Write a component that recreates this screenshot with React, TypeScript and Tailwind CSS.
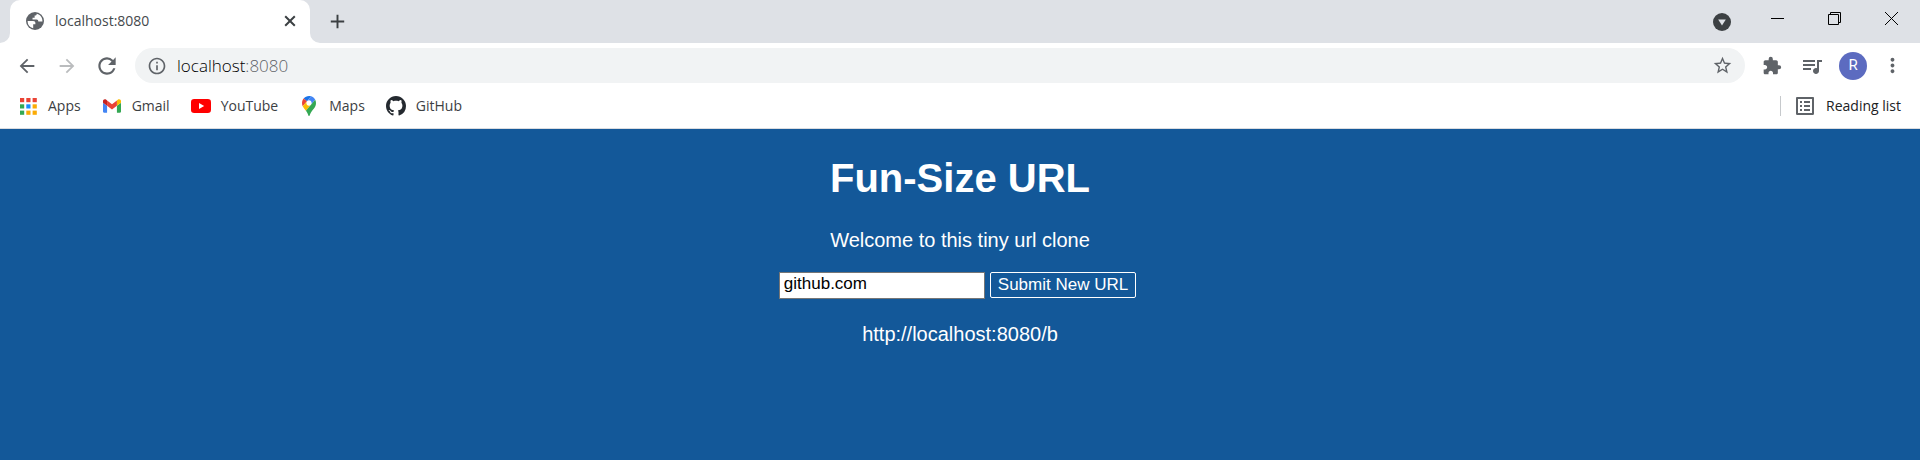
import React, { useState } from "react";
import {
  MdAdd,
  MdArrowBack,
  MdArrowForward,
  MdClose,
  MdExtension,
  MdInfoOutline,
  MdListAlt,
  MdMoreVert,
  MdQueueMusic,
  MdRefresh,
  MdStarOutline,
} from "react-icons/md";

function GlobeIcon() {
  return (
    <svg viewBox="0 0 24 24" className="size-[18px]" aria-hidden="true">
      <circle cx="12" cy="12" r="12" fill="#5f6368" />
      <path
        fill="#fff"
        d="M2.100 12h7.400c2 0 3 1 3 2.800v1.400H9.600v5.300A9.900 9.900 0 0 1 2.100 12zM14.400 2.300c-.2 1.700-1 2.500-2.900 2.500v2.700H8.700v2.400h5.400c1.700 0 2.300 1 2.300 2.600h5.500c.3-4.900-2.800-9-7.500-10.200z"
      />
    </svg>
  );
}

function AppsIcon() {
  const colors = [
    "#ea4335", "#ea4335", "#ea4335",
    "#34a853", "#1a8cff", "#fbab05",
    "#34a853", "#fbab05", "#fbab05",
  ];
  return (
    <svg viewBox="0 0 17 17" className="size-[17px]" aria-hidden="true">
      {colors.map((c, i) => (
        <rect key={i} x={(i % 3) * 6.3} y={Math.floor(i / 3) * 6.3} width="4.200" height="4.200" fill={c} />
      ))}
    </svg>
  );
}

function GmailIcon() {
  return (
    <svg viewBox="52 42 88 66" className="h-[14px] w-[18px]" aria-hidden="true">
      <path fill="#4285f4" d="M58 108h14V74L52 59v43c0 3.320 2.690 6 6 6" />
      <path fill="#34a853" d="M120 108h14c3.320 0 6-2.690 6-6V59l-20 15" />
      <path fill="#fbbc04" d="M120 48v26l20-15v-8c0-7.420-8.470-11.650-14.400-7.200" />
      <path fill="#ea4335" d="M72 74V48l24 18 24-18v26L96 92" />
      <path fill="#c5221f" d="M52 51v8l20 15V48l-5.600-4.200c-5.940-4.450-14.400-.22-14.400 7.200" />
    </svg>
  );
}

function YouTubeIcon() {
  return (
    <svg viewBox="0 0 20 14" className="h-[14px] w-5" aria-hidden="true">
      <rect width="20" height="14" rx="3.200" fill="#f00" />
      <path d="M8 4v6l5.200-3z" fill="#fff" />
    </svg>
  );
}

function MapsIcon() {
  return (
    <svg viewBox="0 0 92.300 132.300" className="h-5 w-[14px]" aria-hidden="true">
      <path fill="#1a73e8" d="M60.200 2.200C55.800.8 51 0 46.100 0 32 0 19.300 6.400 10.800 16.500l21.800 18.300L60.200 2.200z" />
      <path fill="#ea4335" d="M10.800 16.500C4.100 24.500 0 34.900 0 46.100c0 8.700 1.700 15.700 4.600 22l28-33.300-21.800-18.300z" />
      <path fill="#4285f4" d="M46.200 28.500c9.800 0 17.700 7.900 17.700 17.700 0 4.300-1.600 8.300-4.200 11.400 0 0 13.900-16.600 27.500-32.700-5.600-10.800-15.300-19-27-22.700L32.600 34.800c3.300-3.800 8.100-6.300 13.600-6.300" />
      <path fill="#fbbc04" d="M46.200 63.800c-9.800 0-17.700-7.900-17.700-17.700 0-4.300 1.500-8.300 4.100-11.300l-28 33.300c4.800 10.600 12.800 19.200 21 29.900l34.100-40.500c-3.300 3.900-8.100 6.300-13.500 6.300" />
      <path fill="#34a853" d="M59.100 109.200c15.400-24.100 33.300-35 33.300-63 0-7.700-1.900-14.900-5.200-21.300L25.600 98c2.600 3.400 5.300 7.300 7.900 11.300 9.400 14.500 6.800 23.100 12.800 23.100s3.400-8.700 12.800-23.200" />
    </svg>
  );
}

function GitHubIcon() {
  return (
    <svg viewBox="0 0 16 16" className="size-5" fill="#24292f" aria-hidden="true">
      <path d="M8 0C3.580 0 0 3.580 0 8c0 3.540 2.290 6.530 5.470 7.590.4.070.55-.17.55-.38 0-.19-.01-.82-.01-1.490-2.010.37-2.530-.49-2.690-.94-.09-.23-.48-.94-.82-1.130-.28-.15-.68-.52-.01-.53.63-.01 1.080.58 1.230.82.72 1.210 1.870.87 2.330.66.070-.52.28-.87.51-1.070-1.780-.2-3.640-.89-3.640-3.950 0-.87.31-1.590.82-2.150-.08-.2-.36-1.020.08-2.120 0 0 .67-.21 2.200.82.64-.18 1.320-.27 2-.27.68 0 1.360.09 2 .27 1.530-1.040 2.200-.82 2.200-.82.44 1.100.16 1.920.08 2.120.51.56.82 1.270.82 2.150 0 3.070-1.870 3.750-3.650 3.950.29.25.54.73.54 1.480 0 1.070-.01 1.930-.01 2.200 0 .21.15.46.55.38A8.013 8.013 0 0 0 16 8c0-4.420-3.580-8-8-8z" />
    </svg>
  );
}

const bookmarks = [
  { label: "Apps", href: "#apps", icon: <AppsIcon /> },
  { label: "Gmail", href: "#gmail", icon: <GmailIcon /> },
  { label: "YouTube", href: "#youtube", icon: <YouTubeIcon /> },
  { label: "Maps", href: "#maps", icon: <MapsIcon /> },
  { label: "GitHub", href: "#github", icon: <GitHubIcon /> },
];

function TabStrip() {
  return (
    <div className="flex h-[43px] items-stretch bg-[#dee1e6] pl-[10px]">
      <div className="relative flex w-[300px] items-center rounded-t-[10px] bg-white pb-px pl-4 pr-3">
        <svg viewBox="0 0 10 10" className="absolute -left-[10px] bottom-0 size-[10px]" aria-hidden="true">
          <path d="M10 0v10H0A10 10 0 0 0 10 0z" fill="#fff" />
        </svg>
        <svg viewBox="0 0 10 10" className="absolute -right-[10px] bottom-0 size-[10px]" aria-hidden="true">
          <path d="M0 0v10h10A10 10 0 0 1 0 0z" fill="#fff" />
        </svg>
        <GlobeIcon />
        <span className="ml-[11px] flex-1 text-sm text-[#45494d]">localhost:8080</span>
        <button type="button" aria-label="Close tab" className="text-[#3c4043]">
          <svg viewBox="0 0 16 16" className="size-4" fill="none" stroke="currentColor" strokeWidth="2" aria-hidden="true">
            <path d="M3.200 3.200l9.600 9.600M12.800 3.200l-9.600 9.600" />
          </svg>
        </button>
      </div>
      <button type="button" aria-label="New tab" className="ml-4 text-[#3c4043]">
        <MdAdd className="size-[23px]" />
      </button>
      <div className="ml-auto flex">
        <button type="button" aria-label="Search tabs" className="mr-[18px] pt-px">
          <svg viewBox="0 0 18 18" className="size-[18px]" aria-hidden="true">
            <circle cx="9" cy="9" r="9" fill="#3c4043" />
            <path d="M5.200 6.500h7.600L9 12.500z" fill="#dee1e6" />
          </svg>
        </button>
        <div className="flex pb-[6px] text-black">
          <button type="button" aria-label="Minimize" className="grid w-[57px] place-items-center">
            <svg viewBox="0 0 13 13" className="size-[13px]" aria-hidden="true">
              <path d="M0 6.500h13" stroke="currentColor" />
            </svg>
          </button>
          <button type="button" aria-label="Restore" className="grid w-[57px] place-items-center">
            <svg viewBox="0 0 13 13" className="size-[13px]" fill="none" stroke="currentColor" aria-hidden="true">
              <path d="M.5 2.500h10v10H.5zM2.500 2.500v-2h10v10h-2" />
            </svg>
          </button>
          <button type="button" aria-label="Close window" className="grid w-[57px] place-items-center">
            <svg viewBox="0 0 13 13" className="size-[13px]" aria-hidden="true">
              <path d="M0 0l13 13M13 0L0 13" stroke="currentColor" />
            </svg>
          </button>
        </div>
      </div>
    </div>
  );
}

function Toolbar() {
  return (
    <div className="flex h-[45px] items-center px-4 text-[#5f6368]">
      <button type="button" aria-label="Back">
        <MdArrowBack className="size-[22px]" />
      </button>
      <button type="button" aria-label="Forward" className="ml-[18px] text-[#babcbe]">
        <MdArrowForward className="size-[22px]" />
      </button>
      <button type="button" aria-label="Reload" className="ml-4">
        <MdRefresh className="size-[26px]" />
      </button>
      <div className="ml-[15px] flex h-[35px] flex-1 items-center rounded-full bg-[#f1f3f4] pl-3 pr-3">
        <MdInfoOutline className="size-5" />
        <div className="ml-[10px] flex-1 text-[17px] font-light">
          <span className="text-black">localhost</span>
          <span className="text-[#5f6368]">:8080</span>
        </div>
        <button type="button" aria-label="Bookmark this tab">
          <MdStarOutline className="size-[21px]" />
        </button>
      </div>
      <button type="button" aria-label="Extensions" className="ml-[17px]">
        <MdExtension className="size-5" />
      </button>
      <button type="button" aria-label="Media controls" className="ml-[18px]">
        <MdQueueMusic className="size-6" />
      </button>
      <button
        type="button"
        aria-label="Profile"
        className="ml-[15px] grid size-7 place-items-center rounded-full bg-[#5c6bc0] font-['Roboto',sans-serif] text-[15px] text-white"
      >
        R
      </button>
      <button type="button" aria-label="Menu" className="ml-[14px]">
        <MdMoreVert className="size-[23px]" />
      </button>
    </div>
  );
}

function BookmarksBar() {
  return (
    <nav className="flex h-[41px] items-center border-b border-[#dadce0] pb-1 pl-[18px] pr-[19px] text-sm text-[#3c4043]">
      <div className="flex items-center gap-[21px]">
        {bookmarks.map((b) => (
          <a key={b.label} href={b.href} className="flex items-center gap-[10px]">
            <span className="grid size-5 place-items-center">{b.icon}</span>
            {b.label}
          </a>
        ))}
      </div>
      <div className="ml-auto flex items-center">
        <span className="h-5 w-px bg-[#c6c9cc]" />
        <button type="button" className="ml-3 flex items-center gap-[9px] text-[#202124]">
          <MdListAlt className="size-6 text-[#5f6368]" />
          Reading list
        </button>
      </div>
    </nav>
  );
}

export default function App() {
  const [url, setUrl] = useState("github.com");
  return (
    <div className="flex min-h-screen flex-col bg-white">
      <header className="font-['Open_Sans',sans-serif]">
        <TabStrip />
        <Toolbar />
        <BookmarksBar />
      </header>
      <main className="flex flex-1 flex-col items-center bg-[#135899] px-4 pt-[26px] font-['Liberation_Sans',Arial,sans-serif] text-xl leading-6 text-white">
        <h1 className="text-[40px] font-bold leading-[46px]">Fun-Size URL</h1>
        <p className="mt-[27px]">Welcome to this tiny url clone</p>
        <form
          className="mr-[5px] mt-5 flex items-start gap-[5px] text-[17px]"
          onSubmit={(e: React.FormEvent) => e.preventDefault()}
        >
          <input
            type="text"
            aria-label="URL"
            value={url}
            onChange={(e) => setUrl(e.target.value)}
            className="h-[27px] w-[206px] border border-[#767676] bg-white px-1 pb-1 leading-5 text-black"
          />
          <button type="submit" className="h-[26px] rounded-xs border border-white px-[7px] leading-5">
            Submit New URL
          </button>
        </form>
        <p className="mt-[23px]">http://localhost:8080/b</p>
      </main>
    </div>
  );
}
